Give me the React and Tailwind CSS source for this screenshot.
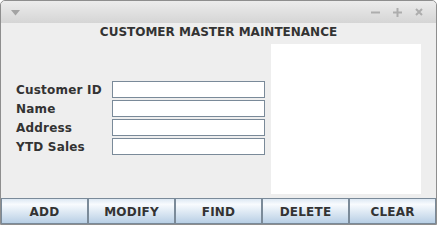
import React from 'react';

const FIELDS = ['Customer ID', 'Name', 'Address', 'YTD Sales'];
const BUTTONS = ['ADD', 'MODIFY', 'FIND', 'DELETE', 'CLEAR'];

const TitleBar = () => (
  <div className="h-[22px] flex items-center rounded-t-[4px] bg-[linear-gradient(to_bottom,#ececec,#d5d5d5)]">
    <svg width="9" height="6" viewBox="0 0 9 6" className="ml-[10px] mt-[1px]">
      <path d="M0 0 H9 L4.5 5.5 Z" fill="#a3a3a3" />
    </svg>
    <div className="flex-1" />
    <div className="flex items-center gap-[13px] mr-[13px]">
      <svg width="9" height="9" viewBox="0 0 9 9">
        <rect x="0" y="3.5" width="9" height="2" fill="#adadad" />
      </svg>
      <svg width="9" height="9" viewBox="0 0 9 9">
        <rect x="0" y="3.5" width="9" height="2" fill="#adadad" />
        <rect x="3.5" y="0" width="2" height="9" fill="#adadad" />
      </svg>
      <svg width="8" height="8" viewBox="0 0 8 8">
        <path d="M1 1 L7 7 M7 1 L1 7" stroke="#adadad" strokeWidth="2" />
      </svg>
    </div>
  </div>
);

export default function App() {
  return (
    <div
      className="w-[437px] h-[225px] border border-[#8e8e8e] rounded-t-[5px] flex flex-col bg-[#eeeeee] text-[#333333] font-bold text-[12px] overflow-hidden"
      style={{ fontFamily: '"DejaVu Sans", sans-serif' }}
    >
      <TitleBar />

      <div className="h-[16px] leading-[16px] pt-[1px] text-center">CUSTOMER MASTER MAINTENANCE</div>

      <div className="flex pl-[15px] mt-[5px]">
        <div className="mt-[36px] flex flex-col">
          {FIELDS.map((f) => (
            <div key={f} className="h-[19px] flex items-center">
              <span className="w-[96px] pt-[1px] tracking-[0.2px]">{f}</span>
              <div className="w-[153px] h-[17px] bg-white border border-[#7a8a99]" />
            </div>
          ))}
        </div>
        <div className="ml-[6px] w-[150px] h-[150px] bg-white" />
      </div>

      <div className="mt-[4px] h-[26px] bg-[#7a8a99] flex gap-[2px] px-[1px] py-[1px]">
        {BUTTONS.map((b) => (
          <div
            key={b}
            className="flex-1 flex items-center justify-center pt-[1px] tracking-[0.2px] bg-[linear-gradient(to_bottom,#dde8f3_0%,#f8fbfe_22%,#b8cfe5_100%)]"
          >
            {b}
          </div>
        ))}
      </div>
    </div>
  );
}
